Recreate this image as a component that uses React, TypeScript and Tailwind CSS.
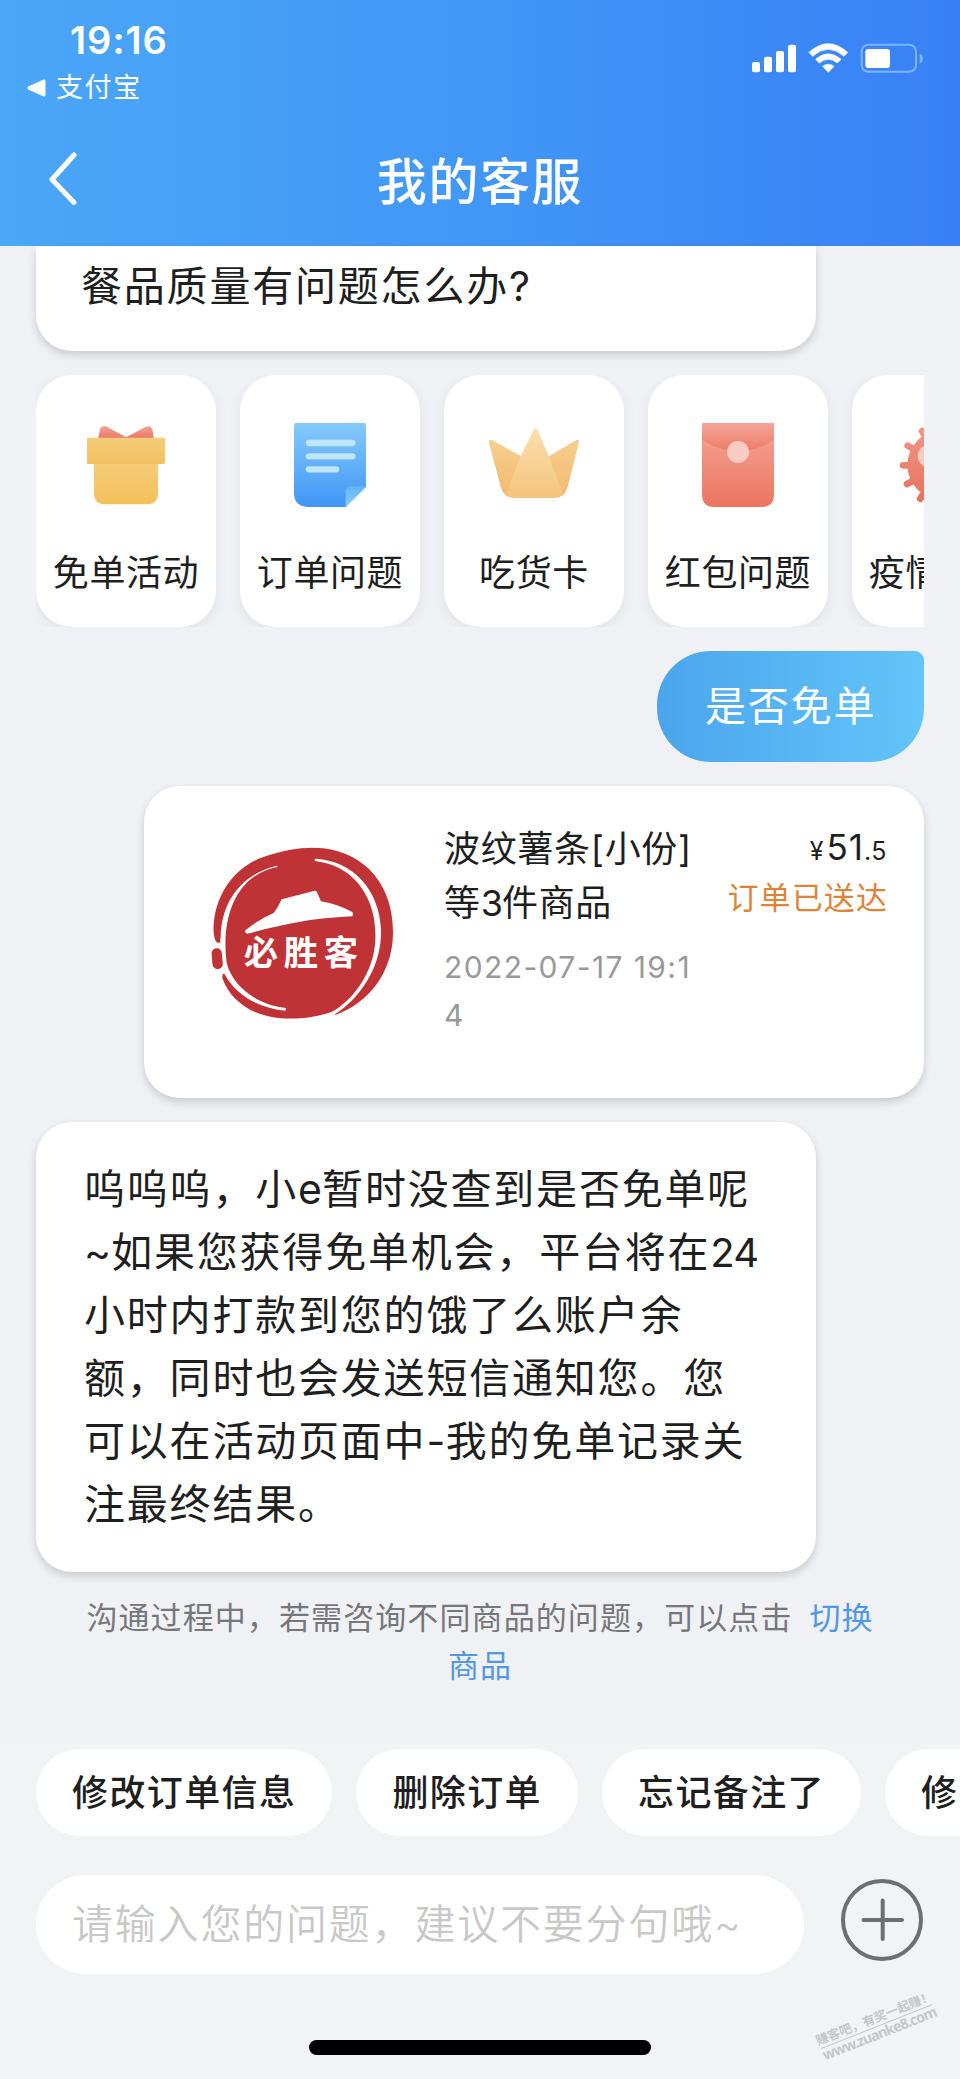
import type { ReactNode } from 'react';

function StatusIcons() {
  return (
    <svg className="h-[30px] w-[171px]" viewBox="817 130 513 90" fill="#fff">
      <rect x="817" y="187" width="24" height="31" rx="6" />
      <rect x="853" y="171" width="24" height="47" rx="6" />
      <rect x="889" y="154" width="24" height="64" rx="6" />
      <rect x="925" y="135" width="24" height="83" rx="6" />
      <path d="M988 158 Q1046 106 1104 158 L1093 170 Q1046 128 999 170 Z" stroke="#fff" strokeWidth="2" strokeLinejoin="round" />
      <path d="M1008 179 Q1046 146 1084 179 L1073 190 Q1046 168 1019 190 Z" stroke="#fff" strokeWidth="2" strokeLinejoin="round" />
      <path d="M1029 200 Q1046 187 1063 200 L1046 218 Z" stroke="#fff" strokeWidth="2" strokeLinejoin="round" />
      <rect x="1146" y="135" width="163" height="81" rx="20" fill="none" stroke="#7ab5fc" strokeWidth="6" />
      <rect x="1157" y="148" width="74" height="57" rx="10" />
      <path d="M1320 162 Q1330 167 1330 176 Q1330 187 1320 192 Z" fill="#7ab5fc" />
    </svg>
  );
}

function Gift() {
  return (
    <svg className="h-[90px] w-[90px]" viewBox="243 180 270 270">
      <defs>
        <linearGradient id="giftBow" x1="0" y1="0" x2="0" y2="1"><stop stopColor="#f2a092" /><stop offset="1" stopColor="#ec7964" /></linearGradient>
        <linearGradient id="giftLid" x1="0" y1="0" x2="0" y2="1"><stop stopColor="#f4cd79" /><stop offset="1" stopColor="#f2c060" /></linearGradient>
        <linearGradient id="giftBox" x1="0" y1="0" x2="0" y2="1"><stop stopColor="#f4cd79" /><stop offset="1" stopColor="#f3c05a" /></linearGradient>
      </defs>
      <path d="M294 236 L300 208 Q304 196 318 199 L378 232 L438 200 Q452 195 457 208 L462 236 Z" fill="url(#giftBow)" />
      <path d="M282 300 H474 V398 Q474 433 438 433 H318 Q282 433 282 398 Z" fill="url(#giftBox)" />
      <rect x="261" y="233" width="234" height="79" rx="4" fill="url(#giftLid)" />
    </svg>
  );
}

function Note() {
  return (
    <svg className="h-[90px] w-[90px]" viewBox="855 180 270 270">
      <defs>
        <linearGradient id="noteBody" x1="0" y1="0" x2="0" y2="1"><stop stopColor="#86cafb" /><stop offset="1" stopColor="#4096f6" /></linearGradient>
        <linearGradient id="noteFold" x1="0" y1="0" x2="0" y2="1"><stop stopColor="#5fb5f8" /><stop offset="1" stopColor="#8bcdfb" /></linearGradient>
      </defs>
      <path d="M888 189 H1092 Q1098 189 1098 195 V380 L1037 441 H922 Q882 438 882 400 V195 Q882 189 888 189 Z" fill="url(#noteBody)" />
      <path d="M1098 380 L1037 441 V396 Q1038 378 1056 378 Z" fill="url(#noteFold)" />
      <g stroke="#bfe6fd" strokeWidth="19" strokeLinecap="round">
        <path d="M927 249 H1057" /><path d="M927 289 H1057" /><path d="M927 328 H1008" />
      </g>
    </svg>
  );
}

function Crown() {
  return (
    <svg className="h-[90px] w-[96px]" viewBox="18 180 288 270">
      <defs>
        <linearGradient id="crownSide" x1="0" y1="0" x2="0" y2="1"><stop stopColor="#f6cf8e" /><stop offset="1" stopColor="#f3b96f" /></linearGradient>
        <linearGradient id="crownMid" x1="0" y1="0" x2="0" y2="1"><stop stopColor="#f9dfae" /><stop offset="1" stopColor="#f6c47c" /></linearGradient>
      </defs>
      <path d="M27 242 Q30 238 36 240 L122 288 H208 L289 240 Q297 238 297 245 L263 380 Q254 413 226 413 H98 Q72 412 62 380 L27 248 Z" fill="url(#crownSide)" />
      <path d="M160 212 Q167 201 174 212 L205 285 L249 399 Q240 413 226 413 H98 Q86 411 80 398 L122 288 Z" fill="url(#crownMid)" />
    </svg>
  );
}

function Envelope() {
  return (
    <svg className="h-[90px] w-[90px]" viewBox="639 180 270 270">
      <defs>
        <linearGradient id="envBody" x1="0" y1="0" x2="0" y2="1"><stop stopColor="#f4a699" /><stop offset="1" stopColor="#ec745e" /></linearGradient>
        <linearGradient id="envFlap" x1="0" y1="0" x2="0" y2="1"><stop stopColor="#f2a598" /><stop offset="1" stopColor="#ed7c66" /></linearGradient>
      </defs>
      <path d="M670 189 H878 Q882 189 882 193 V402 Q882 441 845 441 H703 Q666 441 666 402 V193 Q666 189 670 189 Z" fill="url(#envBody)" />
      <path d="M670 189 H878 Q882 189 882 193 V240 Q832 273 774 274 Q716 273 666 240 V193 Q666 189 670 189 Z" fill="url(#envFlap)" />
      <circle cx="774" cy="276" r="33" fill="#f8cbc3" />
    </svg>
  );
}

function Virus() {
  return (
    <svg className="h-[90px] w-[90px]" viewBox="1251 180 270 270">
      <defs>
        <linearGradient id="virus" gradientUnits="userSpaceOnUse" x1="0" y1="200" x2="0" y2="430"><stop stopColor="#f0978a" /><stop offset="1" stopColor="#e8705b" /></linearGradient>
      </defs>
      <circle cx="1386" cy="315" r="104" fill="url(#virus)" />
      <g stroke="url(#virus)" strokeWidth="20" strokeLinecap="round">
        <path d="M1269 316 L1502.5 316.500" /><path d="M1283 257 L1489 374" /><path d="M1281 372 L1491 258" />
        <path d="M1326 213 L1446 417" /><path d="M1321 416 L1451 214" /><path d="M1386 198 L1386.500 432" />
      </g>
      <circle cx="1346" cy="288" r="33" fill="#f8cbc3" />
    </svg>
  );
}

function ShopLogo() {
  return (
    <svg className="h-[180px] w-[190px] shrink-0" viewBox="231 220 570 540">
      <path
        d="M264 519 Q254 518 251 490 C246 410 290 300 400 262 C470 238 530 230 580 236 C710 252 790 350 789 490 C788 610 715 700 618 735 Q608 734 613 724 C560 744 500 750 445 745 C360 736 300 690 277 625 Q276 608 286 612 L284 590 L282 519 Z"
        fill="#bf3336"
      />
      <path d="M442 288 C340 310 275 390 272 500 C269 530 268 560 274 590 L284 614 C312 668 375 714 465 723 Q471 719 465 714 C380 705 308 650 290 580 C272 440 320 315 442 292 Z" fill="#fff" />
      <rect x="246" y="536" width="31" height="62" rx="15" fill="#bf3336" transform="rotate(-5 261 567)" />
      <path d="M558 267 C670 275 748 360 753 480 C756 590 690 690 605 740 L592 735 C680 690 742 590 736 485 C732 370 660 285 558 275 Q549 271 558 267 Z" fill="#fff" />
      <path d="M346 482 Q388 448 432 429 Q445 412 455 389 L554 363 Q560 362 562 370 L573 395 Q625 404 667 427 Q671 434 667 440 Q620 442 540 451 Q440 468 352 492 Q344 491 346 482 Z" fill="#fff" />
      <text x="341" y="585" fontSize="103" fontWeight="700" letterSpacing="17" fill="#fff" fontFamily="'Noto Sans CJK SC', sans-serif">必胜客</text>
    </svg>
  );
}

const services: { label: string; icon: ReactNode }[] = [
  { label: '免单活动', icon: <Gift /> },
  { label: '订单问题', icon: <Note /> },
  { label: '吃货卡', icon: <Crown /> },
  { label: '红包问题', icon: <Envelope /> },
  { label: '疫情专区', icon: <Virus /> },
];

const chips = ['修改订单信息', '删除订单', '忘记备注了', '修改地址'];

export default function App() {
  return (
    <div className="flex h-[2079px] w-[960px] flex-col overflow-hidden bg-[#f0f1f5] font-['Inter','Noto_Sans_CJK_SC',sans-serif] text-[#1f1f1f]">
      <header className="h-[246px] shrink-0 bg-linear-to-r from-[#4ba7f8] via-[#4297f6] to-[#3980f6] text-white">
        <div className="flex h-[110px] justify-between pr-[37px] pl-[27px]">
          <div className="pt-[17px]">
            <div className="pl-[43px] text-[38px] leading-[46px] font-semibold tracking-[1px]">19:16</div>
            <div className="flex items-center gap-[10px] pt-[6px]">
              <svg className="h-[18px] w-[19px]" viewBox="0 0 19 18" fill="#fff"><path d="M1.2 7.6 16.6.6Q18.5.2 18.5 2v14q0 1.8-1.9 1.4L1.2 10.400Q-.3 9 1.2 7.600Z" /></svg>
              <span className="text-[27px] leading-[38px] tracking-[1.6px]">支付宝</span>
            </div>
          </div>
          <div className="pt-[43px]"><StatusIcons /></div>
        </div>
        <div className="grid h-[136px] grid-cols-[1fr_auto_1fr] items-center">
          <svg className="ml-[47px] h-[54px] w-[32px]" viewBox="0 0 32 54" fill="none" stroke="#fff" strokeWidth="5" strokeLinecap="round" strokeLinejoin="round"><path d="M27 4 5 28.500 27 51.500" /></svg>
          <h1 className="pt-[7px] text-[50px] leading-[70px] font-medium tracking-[1.6px]">我的客服</h1>
        </div>
      </header>

      <main className="flex h-[1497px] shrink-0 flex-col px-[36px]">
        <div className="h-[105px] w-[780px] shrink-0 rounded-b-[36px] bg-white pt-[9px] pl-[45px] text-[41px] leading-[63px] tracking-[1.8px] shadow-[0_4px_9px_rgba(0,0,0,0.16)]">餐品质量有问题怎么办?</div>

        <div className="mt-[24px] flex h-[252px] shrink-0 gap-[24px] overflow-hidden">
          {services.map((s) => (
            <div key={s.label} className="flex w-[180px] shrink-0 flex-col items-center rounded-[36px] bg-white pt-[45px] shadow-[0_4px_14px_rgba(0,0,0,0.06)]">
              {s.icon}
              <div className="mt-[38px] text-[36px] leading-[50px] tracking-[0.6px] whitespace-nowrap">{s.label}</div>
            </div>
          ))}
        </div>

        <div className="mt-[24px] flex h-[111px] w-[267px] shrink-0 items-center self-end rounded-[54px] rounded-tr-[9px] bg-linear-to-r from-[#4ba5ec] to-[#63c5fa] pl-[48px] text-[41px] leading-[63px] tracking-[1.8px] text-white">是否免单</div>

        <section className="mt-[24px] flex h-[312px] w-[780px] shrink-0 self-end rounded-[36px] bg-white pl-[63px] shadow-[0_4px_9px_rgba(0,0,0,0.16)]">
          <div className="pt-[57px]"><ShopLogo /></div>
          <div className="ml-[47px] w-[260px] shrink-0 pt-[36px] whitespace-nowrap">
            <div className="text-[36px] leading-[54px] tracking-[0.7px]">
              <div>波纹薯条[小份]</div>
              <div>等<span className="tracking-[-1px]">3</span>件商品</div>
            </div>
            <div className="mt-[13px] text-[30px] leading-[48px] text-[#999]">
              <div className="tracking-[1.4px]">2022-07-17 19:1</div>
              <div>4</div>
            </div>
          </div>
          <div className="flex-1 pt-[37px] pr-[37px] text-right whitespace-nowrap">
            <div className="text-[35px] leading-[48px]"><span className="mr-[3px] text-[25px]">¥</span><span className="tracking-[1px]">51</span><span className="text-[25px] tracking-[0.5px]">.5</span></div>
            <div className="-mr-[1px] text-[31px] leading-[45px] tracking-[1.1px] text-[#dd8439]">订单已送达</div>
          </div>
        </section>

        <div className="mt-[24px] h-[450px] w-[780px] shrink-0 rounded-[36px] bg-white pt-[36px] pl-[48px] text-[41px] leading-[63px] tracking-[1.8px] whitespace-nowrap shadow-[0_4px_9px_rgba(0,0,0,0.16)]">
          <div>呜呜呜，小<span className="tracking-[0.2px]">e</span>暂时没查到是否免单呢</div>
          <div><span className="tracking-[0px]">~</span>如果您获得免单机会，平台将在<span className="text-[40px] tracking-[-0.8px]">24</span></div>
          <div>小时内打款到您的饿了么账户余</div>
          <div>额，同时也会发送短信通知您。您</div>
          <div>可以在活动页面中<span className="tracking-[0.5px]">-</span>我的免单记录关</div>
          <div>注最终结果。</div>
        </div>

        <p className="mt-[22px] text-center text-[31px] leading-[48px] tracking-[1.1px] whitespace-nowrap text-[#76777c]">
          沟通过程中，若需咨询不同商品的问题，可以点击 <a className="ml-[7px] text-[#5398e6]">切换<br />商品</a>
        </p>
      </main>

      <footer className="relative flex-1 bg-[#f2f3f5] pt-[6px]">
        <div className="flex gap-[24px] overflow-hidden pl-[36px]">
          {chips.map((c) => (
            <div key={c} className="flex h-[87px] shrink-0 items-center rounded-full bg-white px-[36px] text-[36px] leading-[50px] font-medium tracking-[1.4px] whitespace-nowrap">{c}</div>
          ))}
        </div>
        <div className="mt-[39px] flex pl-[36px]">
          <div className="flex h-[99px] w-[768px] items-center rounded-full bg-white pl-[36px] text-[41px] leading-[63px] font-[350] tracking-[1.8px] whitespace-nowrap text-[#c8c8c8]">请输入您的问题，建议不要分句哦~</div>
          <svg className="mt-[4px] ml-[37px] h-[82px] w-[82px]" viewBox="0 0 82 82" fill="none" stroke="#6e6f73" strokeWidth="4" strokeLinecap="round"><circle cx="41" cy="41" r="39" /><path d="M22.500 41h38.500M41.700 21.500V60" /></svg>
        </div>
        <div className="mx-auto mt-[66px] h-[15px] w-[342px] rounded-full bg-black" />
        <svg className="absolute top-[243px] left-[805px] h-[90px] w-[150px]" viewBox="0 0 150 90" fill="#c6c7c9">
          <g transform="translate(16.5 63) rotate(-21.600)">
            <text x="-2" y="-4.500" fontSize="12.600" fontWeight="700" textLength="125" fontFamily="'Noto Sans CJK SC', sans-serif">赚客吧，有奖一起赚！</text>
            <rect x="0" y="-1" width="119" height="1" />
            <text x="-1" y="12" fontSize="14.500" fontWeight="700" textLength="122" fontFamily="'Noto Sans', sans-serif">www.zuanke8.com</text>
          </g>
        </svg>
      </footer>
    </div>
  );
}
